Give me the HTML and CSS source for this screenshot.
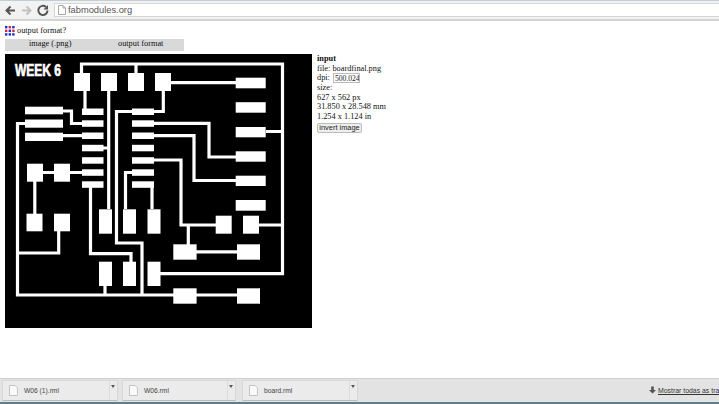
FILE: index.html
```html
<!DOCTYPE html>
<html lang="pt">
<head>
<meta charset="utf-8">
<title>fabmodules.org</title>
<link rel="stylesheet" href="styles.css">
</head>
<body>
<header class="toolbar">
  <svg class="nav" width="50" height="18" viewBox="0 0 50 18">
    <path class="nav-back" d="M15 9.500H7M10.500 5.500L6.500 9.500L10.500 13.500"/>
    <path class="nav-fwd" d="M22 9.500H30M26.500 5.500L30.500 9.500L26.500 13.500"/>
    <path class="nav-back" d="M47.500 9.500A4.600 4.600 0 1 1 46 6"/>
    <path class="nav-fill" d="M48 4V8.500H43.500Z"/>
  </svg>
  <div class="omnibox">
    <svg class="page-ic" width="8" height="10" viewBox="0 0 8 10"><path d="M.5 .5H5L7.500 3V9.500H.5Z M5 .5V3H7.500"/></svg>
    <span class="url">fabmodules.org</span>
  </div>
</header>
<main class="page">
  <div class="title">
    <svg class="logo" width="10" height="10" viewBox="0 0 10 10">
      <rect class="b" x="0" y="0" width="2.400" height="2.400"/><rect class="r" x="3.600" y="0" width="2.400" height="2.400"/><rect class="b" x="7.200" y="0" width="2.400" height="2.400"/>
      <rect class="r" x="0" y="3.600" width="2.400" height="2.400"/><rect class="b" x="3.600" y="3.600" width="2.400" height="2.400"/><rect class="r" x="7.200" y="3.600" width="2.400" height="2.400"/>
      <rect class="b" x="0" y="7.200" width="2.400" height="2.400"/><rect class="b" x="3.600" y="7.200" width="2.400" height="2.400"/><rect class="b" x="7.200" y="7.200" width="2.400" height="2.400"/>
    </svg>
    <span>output format?</span>
  </div>
  <div class="tabs"><span class="tab-a">image (.png)</span><span class="tab-b">output format</span></div>
  <div class="work">
    <svg class="board" width="307" height="274" viewBox="5 53 307 274">
      <rect class="bg" x="5" y="53" width="307" height="274"/>
      <text class="week" x="15" y="75" textLength="46" lengthAdjust="spacingAndGlyphs">WEEK 6</text>
      <path class="tr" d="M81.500 72V63H282.500V272.700H160
        M136 63V73
        M85 90V108
        M108.700 90V208
        M103 147H108.700
        M63 110H71.500V122.500H82
        M25 122.500H17.500V294H237
        M63 134.700H82
        M43 171.500H82
        M34.800 180V213
        M58.700 230V252H17.500
        M90.500 184V252.700H131V261
        M105 285V294
        M132 110.500H116.500V242H142V294
        M132 171.500H125.500V208
        M132 183H152V208
        M171 81.700H236
        M154 110.500H163.300V90
        M266 130.500H282.500
        M154 122.300H209V156H236
        M154 134.700H194V179.500H236
        M154 159H181V224H216
        M259 224H282.500
        M188.300 224V244
        M196 250.800H237"/>
      <g class="pad">
        <rect x="74" y="72" width="16" height="18"/><rect x="101" y="72" width="16" height="18"/><rect x="128" y="72" width="16" height="18"/><rect x="155" y="72" width="16" height="18"/>
        <rect x="25" y="105.700" width="38" height="7.600"/><rect x="25" y="118.500" width="38" height="8.200"/><rect x="25" y="131.700" width="38" height="8.300"/>
        <rect x="82" y="107.500" width="21.500" height="6.500"/><rect x="82" y="119.300" width="21.500" height="6.500"/><rect x="82" y="131.500" width="21.500" height="6.500"/><rect x="82" y="143.800" width="21.500" height="6.500"/><rect x="82" y="156.200" width="21.500" height="6.500"/><rect x="82" y="168.300" width="21.500" height="6.500"/><rect x="82" y="180.300" width="21.500" height="6.500"/>
        <rect x="132" y="107.500" width="22" height="6.500"/><rect x="132" y="119.300" width="22" height="6.500"/><rect x="132" y="131.500" width="22" height="6.500"/><rect x="132" y="143.800" width="22" height="6.500"/><rect x="132" y="156.200" width="22" height="6.500"/><rect x="132" y="168.300" width="22" height="6.500"/><rect x="132" y="180.300" width="22" height="6.500"/>
        <rect x="27" y="162.700" width="16" height="18"/><rect x="54" y="162.700" width="16" height="18"/>
        <rect x="26.500" y="212.700" width="16" height="17.600"/><rect x="54" y="212.700" width="16" height="17.600"/>
        <rect x="99" y="208.300" width="13" height="24.400"/><rect x="123" y="208.300" width="13" height="24.400"/><rect x="147.500" y="208.300" width="13" height="24.400"/>
        <rect x="99" y="260.700" width="13" height="24.300"/><rect x="123" y="260.700" width="13" height="24.300"/><rect x="147.500" y="260.700" width="13" height="24.300"/>
        <rect x="235.700" y="76.700" width="30" height="10.600"/><rect x="235.700" y="101.200" width="30" height="10.500"/><rect x="235.700" y="126" width="30" height="10.300"/><rect x="235.700" y="150.300" width="30" height="10.400"/><rect x="235.700" y="174.700" width="30" height="10.300"/><rect x="235.700" y="199" width="30" height="10.700"/>
        <rect x="215.700" y="214.700" width="16" height="18"/><rect x="243" y="214.700" width="16" height="18"/>
        <rect x="173.300" y="243.300" width="23.300" height="15.400"/><rect x="237" y="243.300" width="23" height="15.400"/>
        <rect x="173.300" y="287.300" width="23.300" height="15.400"/><rect x="237" y="287.300" width="23" height="15.400"/>
      </g>
    </svg>
    <aside class="info">
      <strong>input</strong>
      <div>file: boardfinal.png</div>
      <div class="dpi">dpi: <input class="dpi-in" value="500.024"></div>
      <div>size:</div>
      <div>627 x 562 px</div>
      <div>31.850 x 28.548 mm</div>
      <div>1.254 x 1.124 in</div>
      <button class="invert">invert image</button>
    </aside>
  </div>
</main>
<footer class="downloads">
  <div class="dl dl-1"><svg class="file" width="9" height="11" viewBox="0 0 9 11"><path d="M.5 .5H6L8.500 3V10.500H.5Z"/></svg><span class="dl-name">W06 (1).rml</span><span class="caret"></span></div>
  <div class="dl dl-2"><svg class="file" width="9" height="11" viewBox="0 0 9 11"><path d="M.5 .5H6L8.500 3V10.500H.5Z"/></svg><span class="dl-name">W06.rml</span><span class="caret"></span></div>
  <div class="dl dl-3"><svg class="file" width="9" height="11" viewBox="0 0 9 11"><path d="M.5 .5H6L8.500 3V10.500H.5Z"/></svg><span class="dl-name">board.rml</span><span class="caret"></span></div>
  <div class="show-all">
    <svg class="dl-arrow" width="7" height="9" viewBox="0 0 8 9"><path d="M2.500 0H5.500V4H8L4 8L0 4H2.500Z"/></svg>
    <a class="show-link">Mostrar todas as tra</a>
  </div>
</footer>
</body>
</html>
```
FILE: styles.css
```css
* { box-sizing: border-box; }
html, body { margin: 0; height: 404px; overflow: hidden; }
body {
  display: flex;
  flex-direction: column;
  width: 719px;
  background: #fff;
  font-family: "Liberation Serif", serif;
  font-size: 8.300px;
  color: #111;
}
.toolbar {
  flex: 0 0 20px;
  display: flex;
  align-items: flex-start;
  gap: 4px;
  background: #f2f2f2;
  border-top: 1px solid #c4ccd6;
  border-bottom: 2px solid #d4d4d4;
}
.nav { flex: none; }
.nav-back { fill: none; stroke: #555; stroke-width: 2; }
.nav-fwd { fill: none; stroke: #c2c2c2; stroke-width: 2; }
.nav-fill { fill: #555; }
.omnibox {
  flex: 1;
  height: 14px;
  margin-top: 2px;
  display: flex;
  align-items: center;
  gap: 2px;
  padding-left: 3px;
  background: #fff;
  border: 1px solid #d6d6d6;
  border-right: 0;
}
.page-ic { flex: none; fill: #fff; stroke: #a8a8a8; }
.url { font: 9.300px "Liberation Sans", sans-serif; color: #555; }
.page { padding: 5px 0 0 5px; }
.title {
  display: flex;
  align-items: center;
  gap: 2px;
  height: 10px;
  line-height: 10px;
}
.logo { flex: none; }
.logo .b { fill: #1c2fd0; }
.logo .r { fill: #e0222a; }
.tabs {
  width: 179px;
  height: 12px;
  margin-top: 3px;
  display: flex;
  background: #d9d9d9;
  line-height: 10px;
}
.tab-a { margin-left: 24px; width: 89px; }
.work { display: flex; gap: 5px; margin-top: 3px; }
.board { flex: none; display: block; }
.bg { fill: #000; }
.week {
  fill: #fff;
  stroke: #fff;
  stroke-width: .7px;
  font: bold 17px "Liberation Sans", sans-serif;
}
.tr { fill: none; stroke: #fff; stroke-width: 3.200px; }
.pad rect { fill: #fff; }
.info {
  display: flex;
  flex-direction: column;
  align-items: flex-start;
  line-height: 9.600px;
}
.dpi { display: flex; align-items: center; gap: 1px; height: 10px; white-space: pre; }
.dpi-in {
  width: 27px;
  height: 10px;
  padding: 0 0 0 1px;
  border: 1px solid #bbb;
  background: #fff;
  font: 7.600px "Liberation Serif", serif;
  color: #222;
}
.invert {
  width: 45px;
  height: 10px;
  margin-top: 1px;
  padding: 0;
  border: 1px solid #bbb;
  border-radius: 2px;
  background: #eee;
  font: 7.400px "Liberation Sans", sans-serif;
  color: #222;
  line-height: 8px;
  white-space: nowrap;
}
.downloads {
  margin-top: auto;
  flex: 0 0 26px;
  display: flex;
  align-items: flex-start;
  padding: 1px 0 0 2px;
  background: #e3e3e3;
  border-top: 1px solid #cfcfcf;
  border-bottom: 2px solid #5d7f8c;
}
.dl {
  flex: none;
  height: 21px;
  display: flex;
  align-items: center;
  padding-left: 6px;
  background: #ebebeb;
  border: 1px solid #d8d8d8;
  border-bottom-color: #bdbdbd;
  position: relative;
}
.dl-1 { width: 116px; }
.dl-2 { width: 114px; margin-left: 4px; }
.dl-3 { width: 116px; margin-left: 6px; }
.file { flex: none; fill: #fafafa; stroke: #c4c4c4; }
.dl-name { margin-left: 6px; font: 6.700px "Liberation Sans", sans-serif; color: #444; }
.caret {
  position: absolute;
  right: 0;
  top: 0;
  bottom: 0;
  width: 8px;
  border-left: 1px solid #dcdcdc;
}
.caret::after {
  content: "";
  position: absolute;
  top: 4px;
  left: 1px;
  border: 2px solid transparent;
  border-top: 3px solid #555;
}
.show-all {
  margin-left: auto;
  width: 70px;
  height: 21px;
  flex: none;
  display: flex;
  align-items: center;
  gap: 2px;
  white-space: nowrap;
}
.dl-arrow { flex: none; fill: #555; }
.show-link { font: 6.900px "Liberation Sans", sans-serif; color: #333; text-decoration: underline; }
```
